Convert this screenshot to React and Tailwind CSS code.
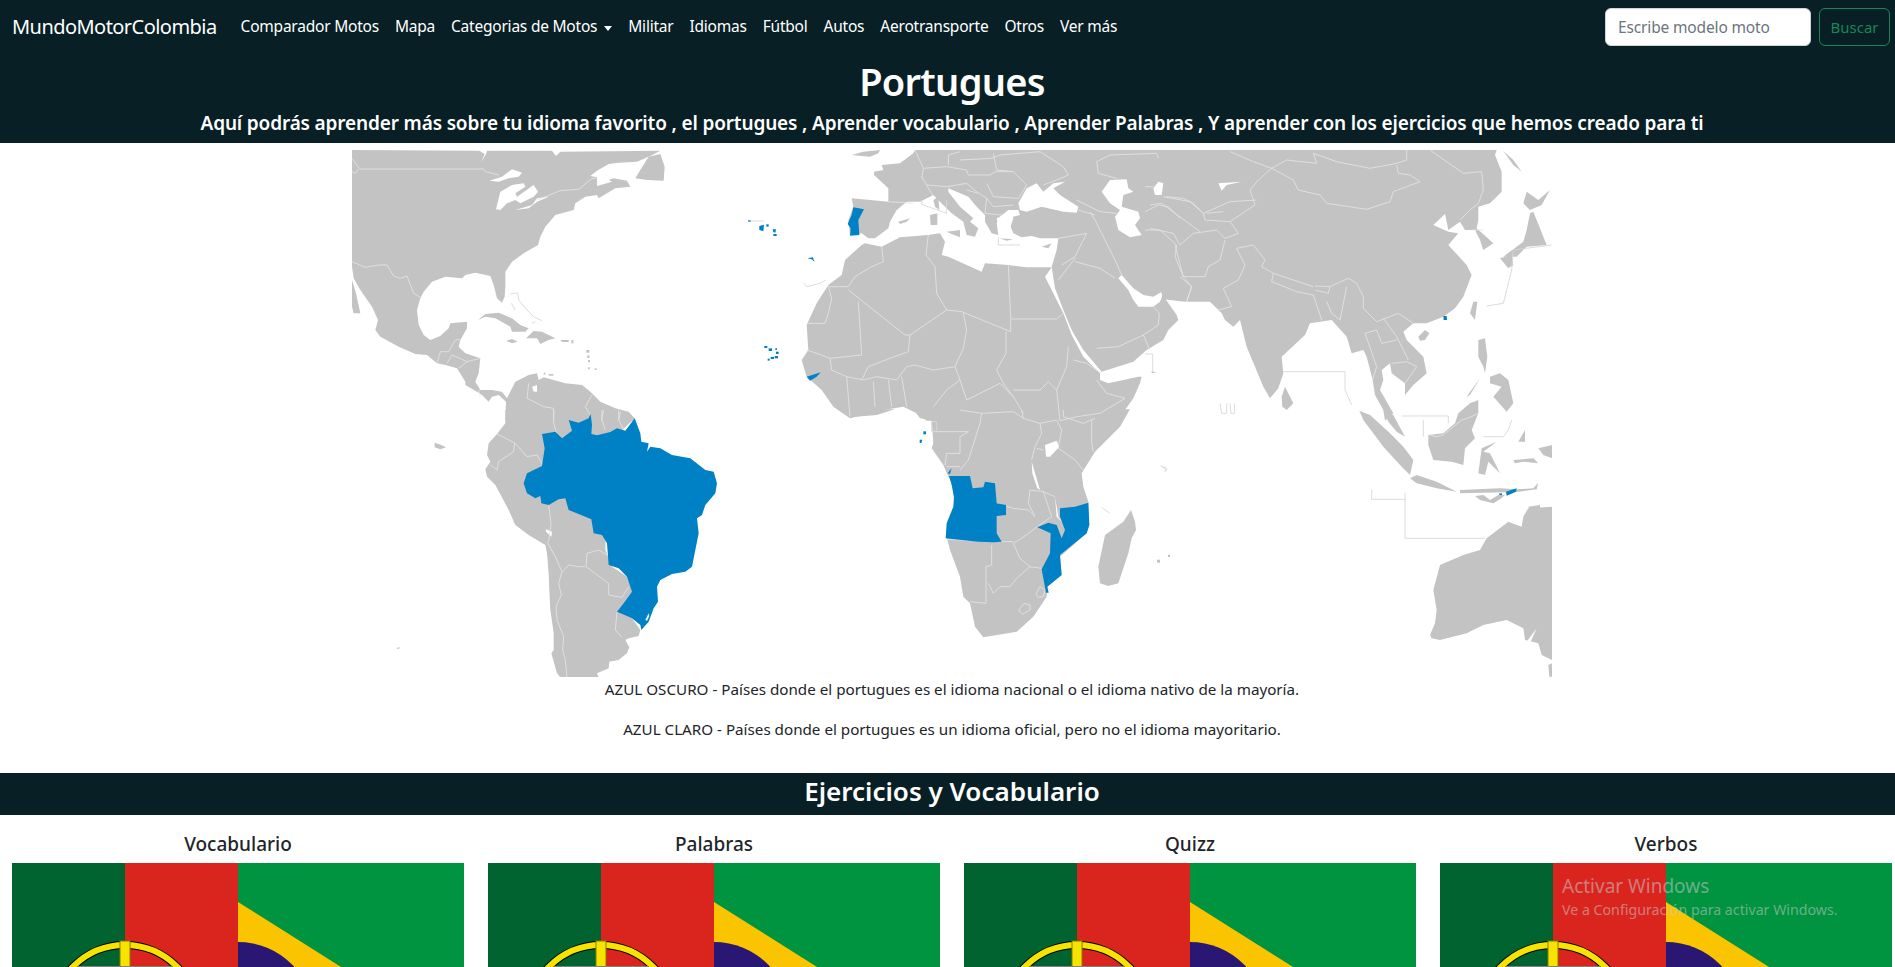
import React from 'react';

const navLinks = ['Comparador Motos', 'Mapa', 'Categorias de Motos', 'Militar', 'Idiomas', 'Fútbol', 'Autos', 'Aerotransporte', 'Otros', 'Ver más'];
const cards = ['Vocabulario', 'Palabras', 'Quizz', 'Verbos'];

// every crop holds its shapes at 3x, relative to its own corner on the page
const crops = [
  {
    x: 352, y: 150,
    land: [
      '0,0 382,2 398,12 388,36 402,12 405,2 600,2 612,18 625,5 925,2 895,18 855,35 800,38 770,42 735,62 715,78 735,82 735,108 780,95 770,90 785,85 825,92 835,110 790,115 740,145 735,135 700,140 670,160 665,180 610,195 580,230 565,260 558,285 515,310 480,335 460,365 460,410 458,440 450,458 435,445 425,405 415,378 370,368 340,375 330,385 280,380 240,395 215,425 205,445 195,480 200,525 215,555 235,570 265,558 290,535 295,520 345,515 345,535 325,570 320,590 340,610 385,625 380,670 370,695 385,720 420,720 450,725 465,745 490,695 530,675 555,670 560,690 575,682 640,700 690,705 715,725 745,755 790,775 830,785 848,805 848,812 460,812 462,755 440,735 420,740 410,755 390,735 375,725 340,705 340,695 315,655 280,645 255,640 225,615 190,612 140,590 85,560 70,540 78,510 60,470 25,420 5,385 0,350',
      '890,20 925,12 938,50 935,92 885,90 870,88 850,85 865,60',
      '0,390 12,430 25,490 5,490 0,470',
      '378,510 400,492 440,488 480,505 505,525 530,535 520,545 480,545 475,530 430,505 400,500',
      '522,565 545,543 570,545 610,565 590,570 565,582 555,565',
      '463,572 480,567 497,575 480,580',
      '625,570 650,570 650,576 630,576',
      '703,600 712,600 712,608 703,608', '706,616 712,616 712,624 706,624', '708,630 714,630 714,636 708,636', '708,652 713,652 713,658 708,658', '728,655 734,655 734,660 728,660', '658,570 664,570 664,580 658,580', '575,668 580,668 580,674 575,674', '590,672 604,672 604,677 590,677',
    ],
    water: [
      '412,92 450,80 480,58 510,68 500,80 470,85 440,95',
      '432,178 445,125 480,105 515,100 520,110 490,130 495,140 545,105 558,125 545,140 505,160 490,150 465,160 445,180',
      '490,180 540,165 555,145 590,140 555,155 530,175',
      '540,710 555,705 555,725 545,725',
    ],
    lines: [
      '25,57 395,57 400,65 440,75',
      '555,150 625,122 680,118 720,85 733,85',
      '0,25 22,55 10,70 0,65',
      '0,335 40,352 80,345 105,345 125,378 145,385 165,378 185,430 210,445',
      '255,640 265,605 290,605 310,570 325,568',
      '285,640 300,615 345,635 385,625',
      '320,655 345,635',
      '380,720 385,740',
      '530,700 525,745 575,770 605,775 605,812',
      '720,735 700,770 715,795',
      '755,780 748,812',
      '805,785 800,812',
    ],
    faint: [
      '475,432 497,428 500,450 525,480 545,500 570,512',
      '478,460 490,480',
      '540,520 550,515',
      '1195,213 1235,213',
    ],
    blue: [
      '1188,211 1196,211 1196,215 1188,215', '1222,228 1236,224 1234,244 1222,240', '1243,223 1250,223 1250,230 1243,230', '1262,238 1272,238 1270,248 1264,246', '1264,252 1274,252 1274,258 1264,258',
      '1237,588 1246,588 1246,594 1237,594', '1250,595 1260,595 1260,603 1250,603', '1270,595 1275,595 1275,600 1270,600', '1272,605 1280,605 1280,612 1272,612', '1268,618 1278,618 1278,625 1268,625', '1256,621 1266,621 1266,627 1256,627', '1247,626 1253,626 1253,632 1247,632',
    ],
  },
  {
    x: 352, y: 410,
    land: [
      '460,0 800,0 848,25 770,100 760,420 780,470 825,500 842,545 830,570 800,605 840,625 865,660 860,678 830,685 820,690 832,712 825,730 800,750 772,755 770,775 735,790 740,802 625,802 615,790 598,730 605,720 605,670 595,600 592,540 590,490 585,430 580,405 530,375 490,345 470,300 430,225 405,200 400,178 415,155 405,135 410,100 435,72 460,40',
      '248,98 268,105 282,112 265,118 248,112',
      '130,714 146,712 140,717',
    ],
    water: ['582,358 600,365 598,380 582,365'],
    lines: [
      '435,72 490,100 525,140 555,135 572,165',
      '488,100 485,125 440,155 435,180 415,165',
      '590,285 597,340 590,395',
      '585,395 610,440 630,485 620,520 628,555 612,590 615,630 635,680 632,720 640,750 645,802',
      '632,485 650,465 680,470 700,470',
      '765,435 740,420 705,430 702,470 770,520 770,555 810,562 830,530',
      '795,605 790,660 810,682',
      '605,0 605,40 615,75',
      '750,0 750,30 760,60',
      '800,0 800,30 815,58',
    ],
    faint: [],
    blue: [
      '570,72 610,65 630,85 660,62 650,30 680,38 710,25 716,12 720,45 718,72 735,76 775,66 795,55 820,62 848,25 865,70 868,95 890,100 885,125 895,110 925,115 960,135 1015,145 1060,180 1085,185 1095,220 1090,250 1060,285 1050,315 1035,325 1040,370 1030,420 1020,470 1000,485 960,492 925,510 915,530 918,575 905,595 890,635 868,660 865,645 840,625 795,605 815,580 840,545 825,500 800,475 770,465 765,400 750,375 725,370 718,328 680,312 650,300 640,265 620,268 590,285 568,280 565,258 550,265 525,250 515,220 525,190 570,168 578,115',
    ],
    blueHoles: ['880,630 890,610 892,618 885,632'],
  },
  {
    x: 800, y: 150,
    land: [
      '345,0 1075,0 1085,425 1060,440 1030,435 1000,415 965,375 955,385 985,420 1000,450 1015,470 1060,470 1080,455 1088,435 1130,495 1135,510 1105,540 1090,570 1040,600 1000,635 905,665 850,600 815,540 790,480 765,415 755,350 770,300 775,265 720,265 695,258 665,262 640,250 630,225 640,200 660,195 655,180 625,180 600,200 590,220 595,255 575,250 555,215 555,195 530,170 505,140 445,115 445,125 480,170 520,205 510,215 535,235 525,260 500,255 490,215 455,190 420,155 400,135 360,155 320,155 290,180 270,215 265,235 225,265 205,265 185,250 150,255 145,210 160,170 155,145 265,155 265,115 222,75 222,65 250,60 245,45 300,40 340,10',
      '195,280 245,290 300,262 385,255 420,250 435,275 425,315 445,320 500,345 545,365 555,340 625,345 680,352 755,352 735,380 790,490 815,555 850,620 900,670 900,690 925,700 1015,680 1025,680 1020,700 1000,745 975,780 955,812 380,812 350,790 310,770 250,780 150,805 100,770 65,720 20,680 5,630 25,600 20,525 50,460 85,405 125,375 135,330 185,285',
      '155,15 190,5 240,0 235,10 210,20',
      '390,195 412,190 412,225 392,225',
      '400,150 415,140 418,180 405,170',
      '440,245 480,240 480,262 455,252',
      '295,215 330,205 320,215 300,222',
      '600,265 640,268 620,272',
      '725,290 755,280 745,295',
      '1055,664 1070,667 1055,670',
    ],
    water: [
      '655,160 680,115 710,100 730,125 760,100 795,95 760,115 780,135 835,170 830,188 790,185 725,170 680,185 660,180',
      '905,125 930,90 980,88 985,115 1000,125 970,135 965,170 1015,185 1020,205 1005,225 1025,255 990,262 955,240 945,200 960,180 930,160',
      '1060,115 1075,95 1090,100 1085,135 1065,135',
      '1255,100 1325,95 1280,105 1265,122',
      '590,205 625,190 640,205 630,235 640,250 600,255',
    ],
    lines: [
      '265,155 340,160',
      '365,80 380,105 400,140',
      '345,0 370,55 365,85',
      '380,105 440,110 500,100',
      '370,55 440,50 500,60 505,75 570,75 585,65 640,65 680,105',
      '580,10 590,60 640,65',
      '445,45 445,15 480,5',
      '480,30 575,25 600,15 720,5 790,50 805,75 770,90 730,105',
      '500,100 530,125 560,145 555,190',
      '560,100 580,140 655,145 680,105',
      '560,145 580,170 640,165',
      '555,190 605,195',
      '500,120 535,130',
      '890,35 930,15 1070,10 1075,25',
      '890,35 895,70 950,85',
      '1035,110 1060,110',
      '1035,185 1075,165 1105,170 1140,205',
      '1100,140 1150,145 1180,160 1210,190',
      '1035,240 1080,240 1130,285 1125,320 1150,380 1175,410 1160,455',
      '885,210 905,250 925,290 950,340 965,375',
      '775,265 860,250',
      '860,250 825,320 785,345',
      '825,325 775,390',
      '825,335 900,355 945,385',
      '890,595 955,590 1030,555 1075,525 1078,490 1060,470',
      '1030,555 1050,600',
      '830,150 900,185 950,190',
      '870,185 885,210',
      '835,180 885,195',
      '245,290 250,335 215,350 165,380 145,410',
      '385,255 378,315 405,350',
      '405,350 410,430 440,480',
      '625,345 632,505',
      '632,507 770,507 790,490',
      '632,507 632,545 485,485 440,480',
      '145,410 85,410 95,445 85,490 75,520 20,520',
      '145,420 315,555',
      '175,455 185,615 90,625',
      '315,555 330,555 325,605 270,625 205,650 185,690',
      '330,555 440,480',
      '490,490 500,540 490,595 465,650 480,690',
      '618,545 618,610 590,660 610,700 640,740',
      '805,590 800,650 770,720 745,695 720,720 640,720',
      '820,630 860,640 905,670',
      '890,690 920,730 975,745 900,790 830,800 780,812 770,720',
      '20,600 50,610 90,625 95,660 140,680 150,800',
      '220,695 225,770',
      '265,690 275,770',
      '140,680 190,690 230,680 290,690 320,650 345,645 400,660 465,650',
      '305,680 320,770',
      '480,690 500,750 600,700 640,740 670,790',
      '400,770 440,720 480,690',
    ],
    faint: [
      '10,398 20,410 60,400 78,390',
      '1035,612 1058,612 1058,665',
      '1260,760 1265,790 1280,790 1280,760',
      '365,150 365,163 440,190',
      '440,150 440,190',
      '595,262 595,285 660,285',
    ],
    blue: [
      '160,172 192,178 175,210 178,255 150,257 152,235 143,222 155,195',
      '20,680 62,667 50,680 30,692',
      '22,325 38,322 44,336 35,328',
    ],
  },
  {
    x: 800, y: 410,
    land: [
      '115,-2 150,22 230,15 285,-2',
      '340,-2 360,25 395,30 400,100 395,115 430,165 445,200 455,215 465,290 440,380 450,420 480,500 490,560 510,580 525,650 550,682 650,665 700,620 740,560 742,530 785,495 780,440 860,370 868,345 865,275 850,230 845,190 885,125 960,50 990,-2',
      '900,520 895,470 915,375 970,335 993,300 1005,335 1008,360 995,385 985,430 955,520 925,528',
      '1071,449 1079,449 1079,457 1071,457',
      '1104,434 1110,434 1110,441 1104,441',
    ],
    water: [
      '735,105 770,92 778,110 750,140 738,140',
      '695,155 720,240 712,235 697,190',
      '765,260 775,320 790,340 770,320',
    ],
    lines: [
      '545,10 540,40 505,150 480,180',
      '545,10 640,5 670,25 720,40 725,70 705,110 695,150',
      '720,40 770,30 785,60 775,110',
      '790,20 850,40 885,25',
      '875,30 875,100 880,125',
      '775,115 825,150 850,180',
      '710,115 730,120',
      '395,65 505,65 480,80 480,130 440,130 435,165',
      '480,170 440,170',
      '590,280 640,295 685,300 705,320 685,280 690,240 730,245 765,260',
      '730,245 755,320 712,350 665,385 640,400',
      '437,388 535,392 600,395 640,395',
      '575,405 575,465 558,470 558,580 510,575',
      '640,400 660,445 690,470 725,475',
      '690,470 650,505 630,530 600,530 580,550 565,520',
      '660,595 672,580 690,585 690,600 668,612 656,602 660,595',
      '708,552 720,530 735,540 730,560 715,562 708,552',
      '545,10 480,0',
      '670,25 665,0',
      '790,20 790,0',
    ],
    faint: [
      '1085,170 1100,178 1095,185',
      '905,292 930,310',
      '395,35 410,35 410,65 395,65 395,35',
    ],
    blue: [
      '447,198 510,198 518,235 550,232 555,215 585,220 590,280 618,285 618,315 590,318 590,370 605,395 580,397 535,395 437,385 440,340 460,290 462,260 455,225',
      '780,295 825,290 865,278 868,345 860,370 780,435 785,495 742,530 746,548 738,548 725,478 750,430 752,370 712,352 745,338 770,345 785,385 795,360 780,320',
      '443,190 455,175 450,192',
      '370,64 378,64 378,73 370,73',
      '359,89 367,89 364,99 359,99',
    ],
  },
  {
    x: 1150, y: 150,
    land: [
      '0,0 1040,0 1035,15 1055,65 1055,125 1020,160 985,170 985,210 980,235 1030,280 1000,300 990,270 975,240 945,240 930,215 895,240 885,192 850,225 895,245 925,250 895,285 950,345 965,375 940,440 915,475 880,500 830,520 790,520 760,545 770,570 820,620 830,670 790,705 765,735 765,700 725,670 720,640 695,660 700,690 690,720 730,790 705,812 700,780 675,735 668,690 650,620 640,600 605,610 590,560 545,510 480,520 465,555 395,620 400,670 385,715 360,745 340,710 290,590 270,510 250,530 225,510 215,490 180,455 105,455 40,448 33,425 0,432',
      '805,560 825,540 838,550 825,570 810,572',
      '960,490 970,455 982,455 975,510',
      '395,740 405,710 430,760 410,780 397,770',
      '1060,320 1120,275 1130,240 1140,190 1150,185 1180,260 1190,285 1130,290 1100,320',
      '1120,160 1130,125 1165,150 1200,120 1175,165 1140,180',
      '1050,325 1085,315 1090,345 1075,355',
      '1060,3 1090,30 1115,65 1090,45',
      '985,570 1005,565 1012,620 1005,670 1000,650 985,620',
      '1020,680 1050,670 1075,690 1090,760 1070,785 1030,740 1055,710 1020,700',
      '950,740 990,685 960,735',
    ],
    water: [],
    lines: [
      '240,5 310,35 365,55',
      '365,55 325,90 300,120 315,165 240,215 265,250',
      '365,55 410,30 500,40 490,10 560,35 660,55 740,40 770,30 770,0',
      '365,55 430,90 445,120 510,135 530,160 650,178 720,155 730,125 810,95 780,75 745,70 740,45',
      '840,0 940,70 995,65 1000,120 985,160 960,180 930,210',
      '965,240 1000,240',
      '0,165 35,160 150,245',
      '40,140 120,155 160,190 165,210 240,215',
      '160,190 240,155 320,150',
      '170,190 220,185',
      '0,235 70,250 90,285 130,250 200,240 225,265 265,250',
      '75,285 100,380 165,380 175,350 210,330 225,270',
      '90,380 125,410 110,455',
      '260,295 285,345 265,390 220,415 245,470 205,480',
      '260,295 310,285 345,330 335,350 370,370 490,410',
      '370,370 365,395 440,425 490,435',
      '495,408 540,410 535,430 495,420',
      '540,410 595,385 620,400 640,440 640,475 680,515',
      '490,435 515,510',
      '530,455 545,490 570,510',
      '590,410 570,510',
      '680,515 745,490 790,520',
      '700,505 740,560 775,630',
      '645,550 680,540 695,580 740,570',
      '725,640 770,635 800,650 765,700',
      '645,550 680,650 668,690',
    ],
    faint: [
      '400,665 585,665 585,720 605,765',
      '1010,468 1060,460 1085,360 1090,300 1205,285',
      '240,760 243,790 253,790 253,760',
    ],
    blue: ['880,498 890,498 891,510 881,510'],
  },
  {
    x: 1150, y: 410,
    land: [
      '628,2 660,15 720,70 760,110 790,150 780,195 755,170 700,110 640,30',
      '700,0 730,15 765,80 740,65 715,35',
      '835,75 880,70 915,40 925,10 960,-20 985,-30 985,10 965,60 975,85 945,115 940,165 905,155 850,150 835,105',
      '985,190 995,115 1040,95 1000,125 1020,130 1050,190 1015,155 1005,195',
      '780,205 800,195 860,215 920,245 860,235 800,220',
      '930,240 1050,235 1100,238 1150,235 1165,218 1160,238 1100,246 930,250',
      '975,258 1000,255 1020,270 1045,255 1065,255 1050,268 1030,280 990,270',
      '1105,95 1125,60 1125,95',
      '1165,115 1206,105 1206,145 1180,135',
      '1090,150 1150,145 1165,160 1120,155 1095,160',
      '1135,290 1170,285 1170,298 1140,300',
      '840,675 855,640 860,600 850,540 870,465 940,435 990,420 1010,385 1075,335 1115,350 1120,320 1135,295 1206,290 1206,750 1175,735 1165,700 1125,690 1120,655 1070,630 1000,645 950,670 870,690 845,685',
      '1195,765 1206,760 1206,800 1198,800',
      '22,450 30,450 30,458 22,458',
      '54,435 60,435 60,441 54,441',
    ],
    water: ['1130,695 1160,655 1140,700'],
    lines: ['840,75 860,80 880,75 935,30 960,22 985,10'],
    faint: [
      '665,240 665,268 765,268 765,385 1005,385',
      '765,248 765,268',
      '755,18 895,18 895,40',
      '820,30 820,80',
      '32,168 50,175 45,185',
      '1000,80 1060,80 1075,60 1085,30',
    ],
    blue: [
      '1068,245 1100,235 1098,245 1070,257',
      '1048,250 1056,250 1056,255 1048,255',
    ],
  },
];

const WorldMap = () => {
  const layer = (key, render) =>
    crops.map((c, i) => (
      <g key={key + i} transform={`translate(${c.x} ${c.y}) scale(${1 / 3})`}>
        {(c[key] || []).map((points, j) => render(points, j))}
      </g>
    ));

  return (
    <svg viewBox="352 150 1200 527" className="block w-[1200px] h-[527px] mx-auto">
      {layer('land', (p, j) => <polygon key={j} points={p} fill="#c3c3c3" />)}
      {layer('water', (p, j) => <polygon key={j} points={p} fill="#ffffff" />)}
      {layer('lines', (p, j) => <polyline key={j} points={p} fill="none" stroke="#e6e6e6" strokeWidth="2.4" strokeLinejoin="round" />)}
      {layer('faint', (p, j) => <polyline key={j} points={p} fill="none" stroke="#d6d6d6" strokeWidth="2.6" />)}
      {layer('blue', (p, j) => <polygon key={j} points={p} fill="#0081c6" />)}
      {layer('blueHoles', (p, j) => <polygon key={j} points={p} fill="#ffffff" />)}
    </svg>
  );
};

const FlagImage = () => (
  <svg viewBox="0 0 452 301" className="block w-[452px] h-[301px]">
    <rect x="226" width="226" height="301" fill="#009440" />
    <polygon points="226,39 402,150 226,262" fill="#fac400" />
    <circle cx="226" cy="155" r="76" fill="#2a1673" />
    <rect width="113" height="301" fill="#01632f" />
    <rect x="113" width="113" height="301" fill="#da251f" />
    <circle cx="113" cy="155" r="73" fill="none" stroke="#000000" strokeWidth="8" />
    <circle cx="113" cy="155" r="73" fill="none" stroke="#f7e300" strokeWidth="6" />
    <rect x="108" y="78" width="10" height="150" fill="#f7e300" stroke="#8a7a00" strokeWidth="1" />
    <rect x="66" y="103" width="95" height="100" fill="#808080" />
    <rect x="76" y="113" width="75" height="80" fill="#ffffff" />
  </svg>
);

export default function App() {
  return (
    <div className="relative h-screen overflow-hidden bg-white text-[#212529] font-['Noto_Sans',sans-serif]">
      <header className="bg-[#071f25] h-[143px]">
        <nav className="h-[54px] w-[1895px] flex items-center pl-3 pr-[5px]">
          <span className="text-white text-[20px] tracking-[-0.55px] mr-4">MundoMotorColombia</span>
          <ul className="flex items-center">
            {navLinks.map((link) => (
              <li key={link} className="px-2 text-white text-[15.5px] tracking-[-0.22px] whitespace-nowrap">
                {link}
                {link === 'Categorias de Motos' && (
                  <span className="inline-block align-middle ml-[7px] border-x-[4px] border-x-transparent border-t-[5px] border-t-white" />
                )}
              </li>
            ))}
          </ul>
          <form className="ml-auto flex items-center gap-2">
            <input
              type="text"
              placeholder="Escribe modelo moto"
              className="w-[206px] h-[38px] bg-white rounded-md px-3 text-[15.5px] tracking-[-0.15px] border border-[#ced4da] placeholder:text-[#6c757d]"
            />
            <button type="button" className="w-[71px] h-[38px] rounded-md border border-[#198754] text-[#198754] text-[15px]">Buscar</button>
          </form>
        </nav>
        <div className="w-[1904px] text-center text-white">
          <h1 className="text-[38px] leading-[48px] font-semibold mt-[3px] tracking-[-0.7px]">Portugues</h1>
          <h4 className="text-[19px] leading-[29px] font-semibold mt-[4px] tracking-[-0.15px]">
            Aquí podrás aprender más sobre tu idioma favorito , el portugues , Aprender vocabulario , Aprender Palabras , Y aprender con los ejercicios que hemos creado para ti
          </h4>
        </div>
      </header>

      <main className="w-[1904px]">
        <section className="pt-[7px] text-center text-[15.2px] leading-6">
          <WorldMap />
          <p>AZUL OSCURO - Países donde el portugues es el idioma nacional o el idioma nativo de la mayoría.</p>
          <p className="mt-4">AZUL CLARO - Países donde el portugues es un idioma oficial, pero no el idioma mayoritario.</p>
        </section>

        <h2 className="mt-8 h-[42px] bg-[#071f25] text-white text-center text-[26px] leading-[37px] font-semibold">
          Ejercicios y Vocabulario
        </h2>

        <section className="grid grid-cols-[repeat(4,452px)] gap-x-6 pl-3 pt-[17px]">
          {cards.map((card) => (
            <div key={card}>
              <h5 className="text-center text-[19px] leading-6 font-medium mb-[7px]">{card}</h5>
              <FlagImage />
            </div>
          ))}
        </section>
      </main>

      {/* aviso de windows encima de la página */}
      <div className="absolute left-[1562px] top-[871px] text-[#c8c8c8]/55 pointer-events-none">
        <div className="text-[19px] leading-[30px]">Activar Windows</div>
        <div className="text-[14.2px] leading-[17px]">Ve a Configuración para activar Windows.</div>
      </div>
    </div>
  );
}
